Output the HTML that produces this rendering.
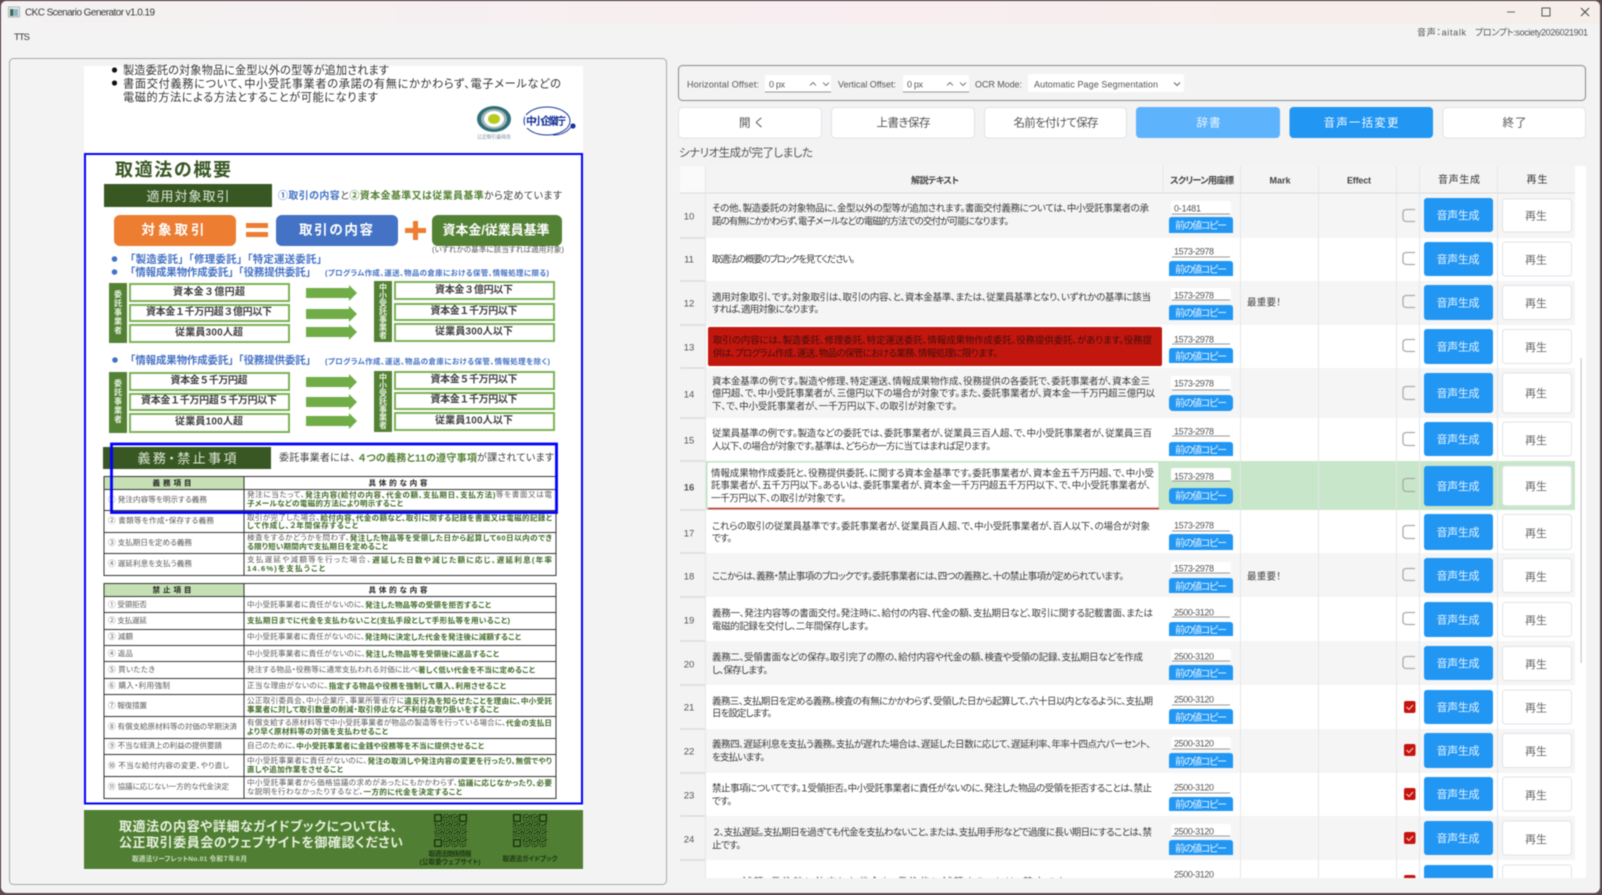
<!DOCTYPE html>
<html lang="ja"><head><meta charset="utf-8"><title>CKC Scenario Generator v1.0.19</title>
<style>
html,body{margin:0;padding:0;width:1602px;height:895px;overflow:hidden;background:#5d4a50}
svg{display:block;filter:blur(.4px)}
text{font-family:"Liberation Sans","Noto Sans CJK JP",sans-serif;font-size:9.5px;fill:#383838;dominant-baseline:central;font-feature-settings:"palt";transform:translateY(.8px)}
.m{text-anchor:middle}
.b{font-weight:700}
.n{font-size:9.5px;fill:#555;text-anchor:middle}
.bb{font-size:11.5px;fill:#555;text-anchor:middle}
.c{font-size:9px;fill:#555}
.cp{font-size:10px;fill:#eaf6ff;text-anchor:middle}
.gv{font-size:11px;fill:#e8f4ff;text-anchor:middle}
.pl{font-size:11px;fill:#666;text-anchor:middle}
.bl{fill:#2196f3}
.ip{fill:#fff}
.ul{stroke:#999;stroke-width:1;fill:none}
.pb{fill:#fff;stroke:#dfe3ea;stroke-width:1}
.ck{fill:none;stroke:#aaa;stroke-width:1.3}
.rd{fill:#c5140e}
.cm{fill:none;stroke:#f6cccc;stroke-width:1.1}
.d{font-size:11.2px;fill:#333}
.bx{fill:#fff;stroke:#7ab356;stroke-width:2}
.lb{fill:#548235}
.v{font-size:8px;font-weight:700;fill:#e9f3e2;text-anchor:middle;writing-mode:vertical-rl;font-feature-settings:normal;transform:none}
.bt{font-size:10px;font-weight:700;fill:#404040;text-anchor:middle;font-feature-settings:normal}
.ar{fill:#70ad47}
.bu{font-size:10.5px;font-weight:700;fill:#4472c4}
.sm{font-size:7.5px;font-weight:700;fill:#4472c4}
.s{font-size:7.6px;fill:#595959}
.g{font-weight:700;fill:#3f6b28}
.th{font-size:7.6px;font-weight:700;fill:#222;text-anchor:middle}
.tl{fill:none;stroke:#333;stroke-width:1}
.f{font-size:13px;font-weight:700;fill:#e7f1df}
.q{font-size:6.6px;fill:#1e3814;font-weight:700;text-anchor:middle}
.qd{fill:#1a3311}
</style></head><body>
<svg xmlns="http://www.w3.org/2000/svg" width="1602" height="895" viewBox="0 0 1602 895">
<defs>
<linearGradient id="tb" x1="0" x2="1" y1="0" y2="0"><stop offset="0" stop-color="#f4f2f2"/><stop offset=".55" stop-color="#f9edf0"/><stop offset="1" stop-color="#f6efe9"/></linearGradient>
<clipPath id="cl"><rect x="676" y="160" width="912" height="718"/></clipPath>
<pattern id="qr" width="8" height="8" patternUnits="userSpaceOnUse"><path class="qd" d="M0 0h2v1H0zM3 0h1v3H3zM5 1h3v1H5zM1 2h1v2H1zM6 3h1v2H6zM3 4h2v1H3zM0 5h2v1H0zM4 6h1v2H4zM6 6h2v1H6zM1 7h2v1H1z"/></pattern>
</defs>

<!-- window -->
<rect x="1" y="1" width="1599" height="892" rx="6" fill="#f3f3f3"/>
<path d="M1 24V7q0-6 6-6h1587q6 0 6 6v17z" fill="url(#tb)"/>
<rect x="8.5" y="7" width="11" height="10" fill="#e8eef0" stroke="#9aa" stroke-width=".8"/><rect x="10" y="9" width="3.5" height="7" fill="#3f6d5e"/><rect x="14" y="9" width="4" height="7" fill="#8fb3c8"/>
<text x="25" y="12" textLength="130" style="font-size:10px">CKC Scenario Generator v1.0.19</text>
<text x="14" y="36.5" textLength="16" style="font-size:9.5px">TTS</text>
<path d="M1507 12h8" stroke="#666" stroke-width="1"/><rect x="1542" y="8" width="8" height="8" fill="none" stroke="#555"/>
<path d="M1581 8l8 8m0-8l-8 8" stroke="#444" stroke-width="1"/>
<text x="1417" y="31.5" textLength="49" class="c">音声：aitalk</text>
<text x="1475" y="31.5" textLength="113" class="c">プロンプト:society2026021901</text>

<!-- left panel -->
<rect x="9.5" y="58.5" width="657" height="826" rx="4" fill="#f3f3f3" stroke="#a8a8a8"/>
<rect x="84" y="66" width="499" height="804" fill="#fff"/>
<circle cx="114.5" cy="70" r="2.6" fill="#111"/><circle cx="114.5" cy="83" r="2.6" fill="#111"/>
<text x="123" y="70" textLength="266" class="d">製造委託の対象物品に金型以外の型等が追加されます</text>
<text x="123" y="83.5" textLength="438" class="d">書面交付義務について、中小受託事業者の承諾の有無にかかわらず、電子メールなどの</text>
<text x="123" y="97" textLength="255" class="d">電磁的方法による方法とすることが可能になります</text>
<!-- logos -->
<ellipse cx="494" cy="119" rx="17" ry="13" fill="#2f6f78"/><ellipse cx="494" cy="119" rx="13" ry="10" fill="#9fb4b4"/><ellipse cx="494" cy="119" rx="10" ry="8" fill="#fff"/><ellipse cx="494" cy="119" rx="6" ry="5" fill="#b8cb1e"/>
<text x="494" y="136.5" textLength="34" class="m" style="font-size:5px;fill:#7c8ca0">公正取引委員会</text>
<ellipse cx="547" cy="121" rx="23" ry="14" fill="none" stroke="#1a3a9c" stroke-width="1"/><rect x="525" y="115" width="42" height="13" fill="#fff"/>
<text x="546" y="120.5" textLength="40" class="m b" style="font-size:10.5px;fill:#17349a">中小企業庁</text>
<circle cx="573" cy="126" r="2.6" fill="#17349a"/><path d="M553 135q12 0 18-8" fill="none" stroke="#17349a"/>

<!-- blue frame -->
<rect x="85" y="154" width="497" height="649.5" fill="#fff" stroke="#0000ff" stroke-width="2"/>
<text x="115" y="169" textLength="116" class="b" style="font-size:18px;fill:#375623">取適法の概要</text>
<rect x="104" y="184" width="168" height="23" fill="#385723"/>
<text x="188" y="195.5" textLength="83" class="m" style="font-size:13px;fill:#dfe9d7">適用対象取引</text>
<text x="278" y="195" textLength="284" class="b" style="font-size:10px;fill:#404040"><tspan style="fill:#4472c4">①取引の内容</tspan><tspan style="font-weight:400">と</tspan><tspan style="fill:#548235">②資本金基準又は従業員基準</tspan><tspan style="font-weight:400">から定めています</tspan></text>
<rect x="114" y="215" width="122" height="31" rx="6" fill="#ed7d31"/>
<text x="173" y="229" textLength="63" class="m b" style="font-size:13.5px;fill:#fff">対象取引</text>
<path d="M246 223h22v5h-22zM246 232h22v5h-22z" fill="#ed7d31"/>
<rect x="276" y="215" width="122" height="31" rx="6" fill="#4472c4"/>
<text x="336" y="229" textLength="74" class="m b" style="font-size:13.5px;fill:#fff">取引の内容</text>
<path d="M413 221h5v7h8v5h-8v7h-5v-7h-8v-5h8z" fill="#ed7d31"/>
<rect x="432" y="215" width="130" height="31" rx="6" fill="#548235"/>
<text x="496" y="229" textLength="107" class="m b" style="font-size:13px;fill:#fff">資本金/従業員基準</text>
<text x="498" y="248.5" textLength="132" class="m" style="font-size:7.5px;fill:#555">(いずれかの基準に該当すれば適用対象)</text>
<circle cx="114.5" cy="259" r="2.8" fill="#4472c4"/><circle cx="114.5" cy="272" r="2.8" fill="#4472c4"/>
<text x="125" y="258.5" textLength="202" class="bu" style="font-feature-settings:normal">「製造委託」「修理委託」「特定運送委託」</text>
<text x="125" y="271.5" textLength="191" class="bu" style="font-feature-settings:normal">「情報成果物作成委託」「役務提供委託」</text>
<text x="325" y="272" textLength="224" class="sm">(プログラム作成、運送、物品の倉庫における保管、情報処理に限る)</text>

<!-- block 1 -->
<rect class="lb" x="109" y="283" width="18" height="60"/><rect class="lb" x="374" y="281" width="18" height="61"/>
<text class="v" x="118" y="312" textLength="44">委託事業者</text>
<text class="v" x="383" y="311" textLength="56">中小受託事業者</text>
<rect class="bx" x="130" y="284" width="159" height="17"/><rect class="bx" x="130" y="305" width="159" height="16"/><rect class="bx" x="130" y="325" width="159" height="17"/>
<rect class="bx" x="395" y="282" width="159" height="17"/><rect class="bx" x="395" y="304" width="159" height="16"/><rect class="bx" x="395" y="324" width="159" height="17"/>
<text class="bt" x="209" y="291.5" textLength="72">資本金３億円超</text>
<text class="bt" x="209" y="311.5" textLength="126">資本金１千万円超３億円以下</text>
<text class="bt" x="209" y="332" textLength="68">従業員300人超</text>
<text class="bt" x="474" y="289.5" textLength="78">資本金３億円以下</text>
<text class="bt" x="474" y="310.5" textLength="87">資本金１千万円以下</text>
<text class="bt" x="474" y="331" textLength="78">従業員300人以下</text>
<path class="ar" d="M306 288h43v-3l8 8-8 8v-3h-43zM306 309h43v-3l8 8-8 8v-3h-43zM306 327h43v-3l8 8-8 8v-3h-43z"/>

<circle cx="115" cy="360" r="2.8" fill="#4472c4"/>
<text x="125" y="359.5" textLength="191" class="bu" style="font-feature-settings:normal">「情報成果物作成委託」「役務提供委託」</text>
<text x="325" y="360.5" textLength="225" class="sm">(プログラム作成、運送、物品の倉庫における保管、情報処理を除く)</text>

<!-- block 2 -->
<rect class="lb" x="109" y="372" width="18" height="61"/><rect class="lb" x="374" y="371" width="18" height="61"/>
<text class="v" x="118" y="401" textLength="44">委託事業者</text>
<text class="v" x="383" y="401" textLength="56">中小受託事業者</text>
<rect class="bx" x="130" y="373" width="159" height="17"/><rect class="bx" x="130" y="394" width="159" height="16"/><rect class="bx" x="130" y="414" width="159" height="18"/>
<rect class="bx" x="395" y="372" width="159" height="17"/><rect class="bx" x="395" y="393" width="159" height="16"/><rect class="bx" x="395" y="413" width="159" height="17"/>
<text class="bt" x="209" y="380" textLength="77">資本金５千万円超</text>
<text class="bt" x="209" y="400" textLength="136">資本金１千万円超５千万円以下</text>
<text class="bt" x="209" y="421" textLength="68">従業員100人超</text>
<text class="bt" x="474" y="379" textLength="87">資本金５千万円以下</text>
<text class="bt" x="474" y="399" textLength="87">資本金１千万円以下</text>
<text class="bt" x="474" y="420" textLength="78">従業員100人以下</text>
<path class="ar" d="M306 377h43v-3l8 8-8 8v-3h-43zM306 397h43v-3l8 8-8 8v-3h-43zM306 416h43v-3l8 8-8 8v-3h-43z"/>

<!-- duties -->
<rect x="103" y="447" width="168" height="22" fill="#385723"/>
<text x="187" y="457.5" textLength="99" class="m" style="font-size:13px;fill:#dfe9d7">義務・禁止事項</text>
<text x="279" y="457.5" textLength="275" style="font-size:10px;fill:#404040">委託事業者には、<tspan class="g" style="fill:#548235"> ４つの義務と11の遵守事項</tspan>が課されています</text>
<rect x="104" y="476" width="140" height="13" fill="#c5e0b4"/>
<path class="tl" d="M104 476.5h452v99H104zM244 476v99M104 489.5h452M104 510.5h452M104 532.5h452M104 553.5h452"/>
<text class="th" x="172" y="482" textLength="39">義務項目</text><text class="th" x="398" y="482" textLength="59">具体的な内容</text>
<text class="s" x="108" y="498.5" textLength="99">① 発注内容等を明示する義務</text>
<text class="s" x="108" y="519.5" textLength="106">② 書類等を作成・保存する義務</text>
<text class="s" x="108" y="541.5" textLength="84">③ 支払期日を定める義務</text>
<text class="s" x="108" y="562.5" textLength="84">④ 遅延利息を支払う義務</text>
<text class="s" x="247" y="493.5" textLength="305">発注に当たって、<tspan class="g">発注内容(給付の内容、代金の額、支払期日、支払方法)</tspan>等を書面又は電</text>
<text class="s g" x="247" y="502.5" textLength="156">子メールなどの電磁的方法により明示すること</text>
<text class="s" x="247" y="516.5" textLength="305">取引が完了した場合、<tspan class="g">給付内容、代金の額など、取引に関する記録を書面又は電磁的記録と</tspan></text>
<text class="s g" x="247" y="524.5" textLength="111">して作成し、２年間保存すること</text>
<text class="s" x="247" y="536.5" textLength="305">検査をするかどうかを問わず、<tspan class="g">発注した物品等を受領した日から起算して60日以内のでき</tspan></text>
<text class="s g" x="247" y="545.5" textLength="141">る限り短い期間内で支払期日を定めること</text>
<text class="s" x="247" y="558.5" textLength="305">支払遅延や減額等を行った場合、<tspan class="g">遅延した日数や減じた額に応じ、遅延利息(年率</tspan></text>
<text class="s g" x="247" y="567.5" textLength="78">14.6%)を支払うこと</text>

<!-- second blue rect -->
<rect x="111.5" y="444" width="445" height="68.5" fill="none" stroke="#0000ff" stroke-width="2.8"/>

<!-- prohibitions -->
<rect x="104" y="583" width="140" height="13" fill="#c5e0b4"/>
<path class="tl" d="M104 583.5h452v215H104zM244 583v215M104 596.5h452M104 612.5h452M104 629.5h452M104 645.5h452M104 661.5h452M104 678.5h452M104 694.5h452M104 716.5h452M104 738.5h452M104 754.5h452M104 776.5h452"/>
<text class="th" x="172" y="589" textLength="39">禁止項目</text><text class="th" x="398" y="589" textLength="59">具体的な内容</text>
<text class="s" x="108" y="603.5" textLength="39">① 受領拒否</text>
<text class="s" x="108" y="619.5" textLength="39">② 支払遅延</text>
<text class="s" x="108" y="635.5" textLength="25">③ 減額</text>
<text class="s" x="108" y="652.5" textLength="25">④ 返品</text>
<text class="s" x="108" y="668.5" textLength="47">⑤ 買いたたき</text>
<text class="s" x="108" y="684.5" textLength="62">⑥ 購入・利用強制</text>
<text class="s" x="108" y="704.5" textLength="39">⑦ 報復措置</text>
<text class="s" x="108" y="725.5" textLength="129">⑧ 有償支給原材料等の対価の早期決済</text>
<text class="s" x="108" y="744.5" textLength="114">⑨ 不当な経済上の利益の提供要請</text>
<text class="s" x="108" y="764.5" textLength="121">⑩ 不当な給付内容の変更、やり直し</text>
<text class="s" x="108" y="785.5" textLength="121">⑪ 協議に応じない一方的な代金決定</text>
<text class="s" x="247" y="603.5" textLength="244">中小受託事業者に責任がないのに、<tspan class="g">発注した物品等の受領を拒否すること</tspan></text>
<text class="s g" x="247" y="619.5" textLength="263">支払期日までに代金を支払わないこと(支払手段として手形払等を用いること)</text>
<text class="s" x="247" y="635.5" textLength="274">中小受託事業者に責任がないのに、<tspan class="g">発注時に決定した代金を発注後に減額すること</tspan></text>
<text class="s" x="247" y="652.5" textLength="252">中小受託事業者に責任がないのに、<tspan class="g">発注した物品等を受領後に返品すること</tspan></text>
<text class="s" x="247" y="668.5" textLength="288">発注する物品・役務等に通常支払われる対価に比べ<tspan class="g">著しく低い代金を不当に定めること</tspan></text>
<text class="s" x="247" y="684.5" textLength="259">正当な理由がないのに、<tspan class="g">指定する物品や役務を強制して購入、利用させること</tspan></text>
<text class="s" x="247" y="699.5" textLength="305">公正取引委員会、中小企業庁、事業所管省庁に<tspan class="g">違反行為を知らせたことを理由に、中小受託</tspan></text>
<text class="s g" x="247" y="708.5" textLength="252">事業者に対して取引数量の削減・取引停止など不利益な取り扱いをすること</text>
<text class="s" x="247" y="721.5" textLength="305">有償支給する原材料等で中小受託事業者が物品の製造等を行っている場合に、<tspan class="g">代金の支払日</tspan></text>
<text class="s g" x="247" y="730.5" textLength="141">より早く原材料等の対価を支払わせること</text>
<text class="s" x="247" y="744.5" textLength="237">自己のために、<tspan class="g">中小受託事業者に金銭や役務等を不当に提供させること</tspan></text>
<text class="s" x="247" y="759.5" textLength="305">中小受託事業者に責任がないのに、<tspan class="g">発注の取消しや発注内容の変更を行ったり、無償でやり</tspan></text>
<text class="s g" x="247" y="768.5" textLength="96">直しや追加作業をさせること</text>
<text class="s" x="247" y="781.5" textLength="305">中小受託事業者から価格協議の求めがあったにもかかわらず、<tspan class="g">協議に応じなかったり、必要</tspan></text>
<text class="s" x="247" y="790.5" textLength="215">な説明を行わなかったりするなど、<tspan class="g">一方的に代金を決定すること</tspan></text>

<!-- footer -->
<rect x="84" y="810" width="499" height="59" fill="#507e32"/>
<text class="f" x="119" y="825.5" textLength="278">取適法の内容や詳細なガイドブックについては、</text>
<text class="f" x="119" y="841.5" textLength="284">公正取引委員会のウェブサイトを御確認ください</text>
<text x="132" y="858.5" textLength="115" class="b" style="font-size:6.6px;fill:#cfe0c3">取適法リーフレットNo.01 令和７年８月</text>
<rect x="434" y="814" width="33" height="33" fill="url(#qr)"/><rect x="513" y="814" width="34" height="33" fill="url(#qr)"/>
<path fill="#507e32" d="M434 814h9v9h-9zM458 814h9v9h-9zM434 838h9v9h-9zM513 814h9v9h-9zM538 814h9v9h-9zM513 838h9v9h-9z"/>
<path fill="none" stroke="#1a3311" stroke-width="1.4" d="M434.7 814.7h6.6v6.6h-6.6zM459.7 814.7h6.6v6.6h-6.6zM434.7 839.7h6.6v6.6h-6.6zM513.7 814.7h6.6v6.6h-6.6zM539.7 814.7h6.6v6.6h-6.6zM513.7 839.7h6.6v6.6h-6.6z"/>
<text class="q" x="450" y="853.5" textLength="43">取適法関係情報</text><text class="q" x="450" y="861.5" textLength="61">(公取委ウェブサイト)</text>
<text class="q" x="530" y="858.5" textLength="55">取適法ガイドブック</text>

<!-- toolbar -->
<rect x="678.5" y="65.5" width="907" height="35" rx="4" fill="#f3f3f3" stroke="#8a8a8a"/>
<text x="687" y="83.5" textLength="72" class="c">Horizontal Offset:</text>
<rect x="765" y="75" width="66" height="17" rx="2" class="ip"/><path class="ul" d="M765 92h66"/>
<text x="769" y="83.5" textLength="16" class="c">0 px</text>
<path d="M810 85.5l3-3 3 3M823 82.5l3 3 3-3" fill="none" stroke="#555" stroke-width=".8"/>
<text x="838" y="83.5" textLength="58" class="c">Vertical Offset:</text>
<rect x="903" y="75" width="66" height="17" rx="2" class="ip"/><path class="ul" d="M903 92h66"/>
<text x="907" y="83.5" textLength="16" class="c">0 px</text>
<path d="M947 85.5l3-3 3 3M960 82.5l3 3 3-3" fill="none" stroke="#555" stroke-width=".8"/>
<text x="975" y="83.5" textLength="47" class="c">OCR Mode:</text>
<rect x="1028" y="74" width="156" height="18" rx="2" class="ip"/>
<text x="1034" y="83.5" textLength="124" class="c">Automatic Page Segmentation</text>
<path d="M1174 82.5l3 3 3-3" fill="none" stroke="#555" stroke-width=".9"/>

<!-- buttons -->
<rect class="pb" x="678.5" y="107.5" width="143" height="30.5" rx="4"/><text class="bb" x="751" y="122.5" textLength="24">開く</text>
<rect class="pb" x="831.5" y="107.5" width="143" height="30.5" rx="4"/><text class="bb" x="903.5" y="122.5" textLength="54">上書き保存</text>
<rect class="pb" x="984.5" y="107.5" width="142" height="30.5" rx="4"/><text class="bb" x="1056" y="122.5" textLength="85">名前を付けて保存</text>
<rect x="1136" y="107" width="144" height="31" rx="4" fill="#5eb3fd"/><text class="bb" x="1208.5" y="122.5" textLength="24" style="fill:#eaf5ff">辞書</text>
<rect x="1289.5" y="107" width="143.5" height="31" rx="4" fill="#2196f3"/><text class="bb" x="1361" y="122.5" textLength="75" style="fill:#f2f9ff">音声一括変更</text>
<rect class="pb" x="1443" y="107.5" width="142.5" height="30.5" rx="4"/><text class="bb" x="1514.5" y="122.5" textLength="24">終了</text>
<text x="679" y="152.5" textLength="134" style="font-size:11.5px;fill:#555">シナリオ生成が完了しました</text>

<!-- table -->
<g clip-path="url(#cl)">
<rect x="1575" y="166" width="11" height="712" fill="#fff"/>
<rect x="680" y="166" width="25" height="27" fill="#fafafa"/>
<rect x="705" y="166" width="870" height="27" fill="#f4f4f4"/>
<rect x="680" y="193" width="25" height="685" fill="#f3f3f3"/>
<rect x="705" y="193" width="870" height="45" fill="#f5f5f5"/>
<rect x="705" y="238" width="870" height="43" fill="#fff"/>
<rect x="705" y="281" width="870" height="44" fill="#f5f5f5"/>
<rect x="705" y="325" width="870" height="43" fill="#fff"/>
<rect x="705" y="368" width="870" height="50" fill="#f5f5f5"/>
<rect x="705" y="418" width="870" height="43" fill="#fff"/>
<rect x="705" y="461" width="870" height="49" fill="#c8e6c9"/>
<rect x="705" y="510" width="870" height="43" fill="#fff"/>
<rect x="705" y="553" width="870" height="44" fill="#f5f5f5"/>
<rect x="705" y="597" width="870" height="44" fill="#fff"/>
<rect x="705" y="641" width="870" height="44" fill="#f5f5f5"/>
<rect x="705" y="685" width="870" height="44" fill="#fff"/>
<rect x="705" y="729" width="870" height="44" fill="#f5f5f5"/>
<rect x="705" y="773" width="870" height="43" fill="#fff"/>
<rect x="705" y="816" width="870" height="44" fill="#f5f5f5"/>
<rect x="705" y="860" width="870" height="18" fill="#fff"/>
<path d="M705.5 166v712M1163 166v27M1240.5 166v712M1318.5 166v712M1396.5 166v712M1419.5 166v712M1497.5 166v712" stroke="#e6e6e6" fill="none"/>
<path d="M680 193h895" stroke="#dcdcdc"/>
<path d="M680 238h25M680 281h25M680 325h25M680 368h25M680 418h25M680 461h25M680 510h25M680 553h25M680 597h25M680 641h25M680 685h25M680 729h25M680 773h25M680 816h25M680 860h25" stroke="#dcdcdc" stroke-width="1.6"/>
<rect x="1580.5" y="358" width="1.2" height="305" fill="#c8c8c8"/>

<text x="935" y="179.5" textLength="48" class="m b" style="font-size:9px;fill:#444">解説テキスト</text>
<text x="1202" y="179.5" textLength="64" class="m b" style="font-size:9.2px;fill:#444">スクリーン用座標</text>
<text x="1280" y="179.5" textLength="21" class="m b" style="font-size:9px;fill:#444">Mark</text>
<text x="1359" y="179.5" textLength="24" class="m b" style="font-size:9px;fill:#444">Effect</text>
<text x="1459" y="179.5" textLength="42" class="m" style="font-size:10px;fill:#333">音声生成</text>
<text x="1537" y="179.5" textLength="21" class="m" style="font-size:10px;fill:#333">再生</text>

<rect x="708" y="327" width="454" height="39" rx="2" fill="#c1170f"/>
<rect x="707" y="462" width="452" height="47" rx="2" fill="#fff" stroke="#bfe0c0"/>
<path d="M708 508.5h451" stroke="#c62828" stroke-width="1.6"/>

<!-- numbers -->
<text class="n" x="689" y="216">10</text><text class="n" x="689" y="259">11</text><text class="n" x="689" y="303">12</text><text class="n" x="689" y="347">13</text><text class="n" x="689" y="394">14</text><text class="n" x="689" y="440">15</text><text class="n b" x="689" y="487">16</text><text class="n" x="689" y="533">17</text><text class="n" x="689" y="576">18</text><text class="n" x="689" y="620">19</text><text class="n" x="689" y="664">20</text><text class="n" x="689" y="707">21</text><text class="n" x="689" y="751">22</text><text class="n" x="689" y="795">23</text><text class="n" x="689" y="839">24</text>

<!-- main text -->
<text x="712" y="208" textLength="437">その他、製造委託の対象物品に、金型以外の型等が追加されます。書面交付義務については、中小受託事業者の承</text>
<text x="712" y="221" textLength="297">諾の有無にかかわらず、電子メールなどの電磁的方法での交付が可能になります。</text>
<text x="712" y="259" textLength="143">取適法の概要のブロックを見てください。</text>
<text x="712" y="297" textLength="439">適用対象取引、です。対象取引は、取引の内容、と、資本金基準、または、従業員基準となり、いずれかの基準に該当</text>
<text x="712" y="309" textLength="107">すれば、適用対象になります。</text>
<text x="713" y="340" textLength="439" style="fill:#470d08">取引の内容には、製造委託、修理委託、特定運送委託、情報成果物作成委託、役務提供委託、があります。役務提</text>
<text x="713" y="353" textLength="285" style="fill:#470d08">供は、プログラム作成、運送、物品の保管における業務、情報処理に限ります。</text>
<text x="712" y="381" textLength="438">資本金基準の例です。製造や修理、特定運送、情報成果物作成、役務提供の各委託で、委託事業者が、資本金三</text>
<text x="712" y="393" textLength="443">億円超、で、中小受託事業者が、三億円以下の場合が対象です。また、委託事業者が、資本金一千万円超三億円以</text>
<text x="712" y="406" textLength="245">下、で、中小受託事業者が、一千万円以下、の取引が対象です。</text>
<text x="712" y="433" textLength="440">従業員基準の例です。製造などの委託では、委託事業者が、従業員三百人超、で、中小受託事業者が、従業員三百</text>
<text x="712" y="446" textLength="279">人以下、の場合が対象です。基準は、どちらか一方に当てはまれば足ります。</text>
<text x="711" y="473" textLength="443">情報成果物作成委託と、役務提供委託、に関する資本金基準です。委託事業者が、資本金五千万円超、で、中小受</text>
<text x="711" y="485" textLength="440">託事業者が、五千万円以下。あるいは、委託事業者が、資本金一千万円超五千万円以下、で、中小受託事業者が、</text>
<text x="711" y="498" textLength="135">一千万円以下、の取引が対象です。</text>
<text x="712" y="526" textLength="438">これらの取引の従業員基準です。委託事業者が、従業員百人超、で、中小受託事業者が、百人以下、の場合が対象</text>
<text x="712" y="538" textLength="20">です。</text>
<text x="712" y="576" textLength="412">ここからは、義務・禁止事項のブロックです。委託事業者には、四つの義務と、十の禁止事項が定められています。</text>
<text x="712" y="613" textLength="441">義務一、発注内容等の書面交付。発注時に、給付の内容、代金の額、支払期日など、取引に関する記載書面、または</text>
<text x="712" y="626" textLength="157">電磁的記録を交付し、二年間保存します。</text>
<text x="712" y="657" textLength="431">義務二、受領書面などの保存。取引完了の際の、給付内容や代金の額、検査や受領の記録、支払期日などを作成</text>
<text x="712" y="670" textLength="56">し、保存します。</text>
<text x="712" y="701" textLength="441">義務三、支払期日を定める義務。検査の有無にかかわらず、受領した日から起算して、六十日以内となるように、支払期</text>
<text x="712" y="713" textLength="60">日を設定します。</text>
<text x="712" y="744" textLength="439">義務四、遅延利息を支払う義務。支払が遅れた場合は、遅延した日数に応じて、遅延利率、年率十四点六パーセント、</text>
<text x="712" y="757" textLength="53">を支払います。</text>
<text x="712" y="788" textLength="440">禁止事項についてです。１受領拒否。中小受託事業者に責任がないのに、発注した物品の受領を拒否することは、禁止</text>
<text x="712" y="801" textLength="20">です。</text>
<text x="713" y="832" textLength="439">２、支払遅延。支払期日を過ぎても代金を支払わないこと、または、支払用手形などで過度に長い期日にすることは、禁</text>
<text x="712" y="845" textLength="29">止です。</text>
<text x="727" y="881.5" textLength="343">３、減額。発注時に決定した代金を、発注後に減額することは、禁止です。</text>

<text x="1247" y="302" textLength="34" style="fill:#444">最重要！</text>
<text x="1247" y="576" textLength="34" style="fill:#444">最重要！</text>

<!-- inputs -->
<g class="ip"><rect x="1171" y="201" width="60" height="13" rx="2"/><rect x="1171" y="243" width="60" height="14" rx="2"/><rect x="1171" y="288" width="60" height="12" rx="2"/><rect x="1171" y="332" width="60" height="12" rx="2"/><rect x="1171" y="376" width="60" height="14" rx="2"/><rect x="1171" y="424" width="60" height="12" rx="2"/><rect x="1171" y="468" width="60" height="13" rx="2"/><rect x="1171" y="518" width="60" height="13" rx="2"/><rect x="1171" y="562" width="60" height="11" rx="2"/><rect x="1171" y="605" width="60" height="12" rx="2"/><rect x="1171" y="649" width="60" height="12" rx="2"/><rect x="1171" y="693" width="60" height="12" rx="2"/><rect x="1171" y="737" width="60" height="12" rx="2"/><rect x="1171" y="780" width="60" height="13" rx="2"/><rect x="1171" y="824" width="60" height="12" rx="2"/><rect x="1171" y="868" width="60" height="12" rx="2"/></g>
<path class="ul" d="M1172 214h58M1172 257h58M1172 300h58M1172 344h58M1172 390h58M1172 436h58M1172 481h58M1172 531h58M1172 573h58M1172 617h58M1172 661h58M1172 705h58M1172 749h58M1172 793h58M1172 836h58"/>
<text class="c" x="1174" y="207.5" textLength="27">0-1481</text>
<text class="c" x="1174" y="250.5" textLength="40">1573-2978</text><text class="c" x="1174" y="294.5" textLength="40">1573-2978</text><text class="c" x="1174" y="338.5" textLength="40">1573-2978</text><text class="c" x="1174" y="382.5" textLength="40">1573-2978</text><text class="c" x="1174" y="430.5" textLength="40">1573-2978</text><text class="c" x="1174" y="475.5" textLength="40">1573-2978</text><text class="c" x="1174" y="524.5" textLength="40">1573-2978</text><text class="c" x="1174" y="567.5" textLength="40">1573-2978</text>
<text class="c" x="1174" y="611.5" textLength="40">2500-3120</text><text class="c" x="1174" y="655.5" textLength="40">2500-3120</text><text class="c" x="1174" y="698.5" textLength="40">2500-3120</text><text class="c" x="1174" y="742.5" textLength="40">2500-3120</text><text class="c" x="1174" y="786.5" textLength="40">2500-3120</text><text class="c" x="1174" y="830.5" textLength="40">2500-3120</text><text class="c" x="1174" y="873.5" textLength="40">2500-3120</text>

<!-- copy buttons -->
<g class="bl"><path d="M1169 233v-13q0-3 3-3h58q3 0 3 3v13z"/><path d="M1169 276v-12q0-3 3-3h58q3 0 3 3v12z"/><path d="M1169 320v-12q0-3 3-3h58q3 0 3 3v12z"/><path d="M1169 363v-12q0-3 3-3h58q3 0 3 3v12z"/><rect x="1169" y="395" width="64" height="16" rx="4"/><path d="M1169 456v-11q0-3 3-3h58q3 0 3 3v11z"/><rect x="1169" y="488" width="64" height="16" rx="4"/><path d="M1169 550v-13q0-3 3-3h58q3 0 3 3v13z"/><path d="M1169 593v-12q0-3 3-3h58q3 0 3 3v12z"/><path d="M1169 636v-11q0-3 3-3h58q3 0 3 3v11z"/><path d="M1169 680v-12q0-3 3-3h58q3 0 3 3v12z"/><path d="M1169 724v-12q0-3 3-3h58q3 0 3 3v12z"/><path d="M1169 768v-12q0-3 3-3h58q3 0 3 3v12z"/><path d="M1169 811v-11q0-3 3-3h58q3 0 3 3v11z"/><path d="M1169 855v-12q0-3 3-3h58q3 0 3 3v12z"/></g>
<text class="cp" x="1201" y="225.5" textLength="52">前の値コピー</text><text class="cp" x="1201" y="269.5" textLength="52">前の値コピー</text><text class="cp" x="1201" y="313" textLength="52">前の値コピー</text><text class="cp" x="1201" y="356.5" textLength="52">前の値コピー</text><text class="cp" x="1201" y="403" textLength="52">前の値コピー</text><text class="cp" x="1201" y="450" textLength="52">前の値コピー</text><text class="cp" x="1201" y="496" textLength="52">前の値コピー</text><text class="cp" x="1201" y="543" textLength="52">前の値コピー</text><text class="cp" x="1201" y="586.5" textLength="52">前の値コピー</text><text class="cp" x="1201" y="630" textLength="52">前の値コピー</text><text class="cp" x="1201" y="673.5" textLength="52">前の値コピー</text><text class="cp" x="1201" y="717.5" textLength="52">前の値コピー</text><text class="cp" x="1201" y="761.5" textLength="52">前の値コピー</text><text class="cp" x="1201" y="804.5" textLength="52">前の値コピー</text><text class="cp" x="1201" y="848.5" textLength="52">前の値コピー</text>

<!-- checkboxes -->
<path class="ck" d="M1415 209.5h-8q-4 0-4 3v6q0 3 4 3h8M1415 252.5h-8q-4 0-4 3v6q0 3 4 3h8M1415 295.5h-8q-4 0-4 3v6q0 3 4 3h8M1415 339.5h-8q-4 0-4 3v6q0 3 4 3h8M1415 386.5h-8q-4 0-4 3v7q0 3 4 3h8M1415 432.5h-8q-4 0-4 3v7q0 3 4 3h8M1415 478.5h-8q-4 0-4 3v7q0 3 4 3h8M1415 525.5h-8q-4 0-4 3v7q0 3 4 3h8M1415 568.5h-8q-4 0-4 3v6q0 3 4 3h8M1415 612.5h-8q-4 0-4 3v6q0 3 4 3h8M1415 656.5h-8q-4 0-4 3v6q0 3 4 3h8"/>
<g class="rd"><rect x="1404" y="701" width="11.5" height="12" rx="2"/><rect x="1404" y="744" width="11.5" height="12" rx="2"/><rect x="1404" y="788" width="11.5" height="12" rx="2"/><rect x="1404" y="832" width="11.5" height="12" rx="2"/><rect x="1404" y="875" width="11.5" height="12" rx="2"/></g>
<path class="cm" d="M1406.5 707l2.5 2.5 4-4.5M1406.5 750l2.5 2.5 4-4.5M1406.5 794l2.5 2.5 4-4.5M1406.5 838l2.5 2.5 4-4.5"/>

<!-- voice buttons -->
<g class="bl"><rect x="1424" y="198" width="69" height="34" rx="3"/><rect x="1424" y="242" width="69" height="34" rx="3"/><rect x="1424" y="285" width="69" height="35" rx="3"/><rect x="1424" y="329" width="69" height="35" rx="3"/><rect x="1424" y="373" width="69" height="40" rx="3"/><rect x="1424" y="422" width="69" height="34" rx="3"/><rect x="1424" y="466" width="69" height="40" rx="3"/><rect x="1424" y="514" width="69" height="36" rx="3"/><rect x="1424" y="558" width="69" height="35" rx="3"/><rect x="1424" y="602" width="69" height="35" rx="3"/><rect x="1424" y="646" width="69" height="34" rx="3"/><rect x="1424" y="690" width="69" height="34" rx="3"/><rect x="1424" y="733" width="69" height="35" rx="3"/><rect x="1424" y="777" width="69" height="34" rx="3"/><rect x="1424" y="821" width="69" height="34" rx="3"/><rect x="1424" y="865" width="69" height="34" rx="3"/></g>
<text class="gv" x="1458" y="215" textLength="43">音声生成</text><text class="gv" x="1458" y="259" textLength="43">音声生成</text><text class="gv" x="1458" y="302.5" textLength="43">音声生成</text><text class="gv" x="1458" y="346.5" textLength="43">音声生成</text><text class="gv" x="1458" y="393" textLength="43">音声生成</text><text class="gv" x="1458" y="439" textLength="43">音声生成</text><text class="gv" x="1458" y="486" textLength="43">音声生成</text><text class="gv" x="1458" y="532" textLength="43">音声生成</text><text class="gv" x="1458" y="575.5" textLength="43">音声生成</text><text class="gv" x="1458" y="619.5" textLength="43">音声生成</text><text class="gv" x="1458" y="663" textLength="43">音声生成</text><text class="gv" x="1458" y="707" textLength="43">音声生成</text><text class="gv" x="1458" y="750.5" textLength="43">音声生成</text><text class="gv" x="1458" y="794" textLength="43">音声生成</text><text class="gv" x="1458" y="838" textLength="43">音声生成</text>

<!-- play buttons -->
<g class="pb"><rect x="1502.5" y="199" width="69" height="33" rx="3"/><rect x="1502.5" y="242" width="69" height="34" rx="3"/><rect x="1502.5" y="285.5" width="69" height="34" rx="3"/><rect x="1502.5" y="329.5" width="69" height="34" rx="3"/><rect x="1502.5" y="373" width="69" height="40" rx="3"/><rect x="1502.5" y="422" width="69" height="34" rx="3"/><rect x="1502.5" y="466" width="69" height="39.5" rx="3"/><rect x="1502.5" y="514.5" width="69" height="35" rx="3"/><rect x="1502.5" y="558.5" width="69" height="34" rx="3"/><rect x="1502.5" y="602.5" width="69" height="34" rx="3"/><rect x="1502.5" y="646.5" width="69" height="34" rx="3"/><rect x="1502.5" y="690" width="69" height="34" rx="3"/><rect x="1502.5" y="733.5" width="69" height="34" rx="3"/><rect x="1502.5" y="777" width="69" height="34" rx="3"/><rect x="1502.5" y="821" width="69" height="34" rx="3"/><rect x="1502.5" y="865" width="69" height="34" rx="3"/></g>
<text class="pl" x="1536" y="215.5" textLength="22">再生</text><text class="pl" x="1536" y="259.5" textLength="22">再生</text><text class="pl" x="1536" y="303" textLength="22">再生</text><text class="pl" x="1536" y="347" textLength="22">再生</text><text class="pl" x="1536" y="393" textLength="22">再生</text><text class="pl" x="1536" y="440" textLength="22">再生</text><text class="pl" x="1536" y="486" textLength="22">再生</text><text class="pl" x="1536" y="533" textLength="22">再生</text><text class="pl" x="1536" y="576.5" textLength="22">再生</text><text class="pl" x="1536" y="620" textLength="22">再生</text><text class="pl" x="1536" y="664" textLength="22">再生</text><text class="pl" x="1536" y="707.5" textLength="22">再生</text><text class="pl" x="1536" y="751" textLength="22">再生</text><text class="pl" x="1536" y="795" textLength="22">再生</text><text class="pl" x="1536" y="839" textLength="22">再生</text>
</g>
</svg>
</body></html>
